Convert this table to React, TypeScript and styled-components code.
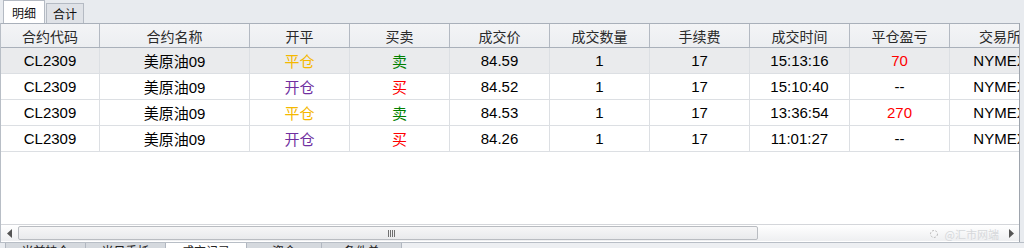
import styled, { createGlobalStyle } from "styled-components";

const GlobalStyle = createGlobalStyle`
  html, body {
    margin: 0;
    padding: 0;
    overflow: hidden;
    background: #e8ebef;
  }
  body {
    font-family: "Liberation Sans", "Noto Sans CJK SC", sans-serif;
  }
`;

const Frame = styled.div`
  width: 1024px;
  height: 248px;
  overflow: hidden;
  display: flex;
  flex-direction: column;
  background: #e8ebef;
`;

const TabStrip = styled.div`
  height: 23px;
  flex-shrink: 0;
  display: flex;
  align-items: flex-end;
  padding-left: 3px;
  gap: 1px;
`;

const Tab = styled.div<{ $active?: boolean }>`
  height: ${(p) => (p.$active ? 23 : 20)}px;
  padding: 0 ${(p) => (p.$active ? 8 : 6)}px;
  box-sizing: border-box;
  display: flex;
  align-items: center;
  font-size: 12px;
  color: #111;
  background: ${(p) => (p.$active ? "#ffffff" : "#dfe2e7")};
  border: 1px solid #b4bac3;
  border-bottom: none;
`;

const Panel = styled.div`
  width: 1020px;
  height: 219px;
  flex-shrink: 0;
  background: #ffffff;
  border-left: 1px solid #b8bec6;
  border-right: 1px solid #9ea4ad;
  box-sizing: border-box;
  display: flex;
  flex-direction: column;
  overflow: hidden;
`;

const Table = styled.div`
  flex: 1;
  overflow: hidden;
`;

const Row = styled.div<{ $head?: boolean; $selected?: boolean }>`
  display: grid;
  grid-template-columns: 99px 150px repeat(7, 100px) 100px;
  height: ${(p) => (p.$head ? 25 : 26)}px;
  box-sizing: border-box;
  border-top: ${(p) => (p.$head ? "1px solid #a9b0ba" : "none")};
  border-bottom: 1px solid ${(p) => (p.$head ? "#a9b0ba" : "#dcdfe3")};
  background: ${(p) =>
    p.$head
      ? "linear-gradient(#f3f4f6, #eceef1)"
      : p.$selected
      ? "#eaebed"
      : "#ffffff"};
  font-size: ${(p) => (p.$head ? 14 : 15)}px;
  color: ${(p) => (p.$head ? "#2a2a2a" : "#000")};
`;

const Cell = styled.div<{ $head?: boolean; $tone?: string }>`
  display: flex;
  align-items: center;
  justify-content: center;
  border-right: 1px solid ${(p) => (p.$head ? "#b3b9c2" : "#dcdfe3")};
  color: ${(p) => p.$tone || "inherit"};
  white-space: nowrap;
  overflow: hidden;
  &:last-child {
    border-right: none;
  }
`;

const ScrollBar = styled.div`
  position: relative;
  height: 16px;
  flex-shrink: 0;
  margin-bottom: 1px;
  display: flex;
  align-items: center;
  border-top: 1px solid #d4d6da;
  background: linear-gradient(#ffffff, #eeeff1);
`;

const Arrow = styled.div`
  width: 17px;
  display: flex;
  justify-content: center;
  svg {
    display: block;
  }
`;

const Thumb = styled.div`
  width: 740px;
  height: 14px;
  box-sizing: border-box;
  border: 1px solid #b9bcc1;
  border-radius: 2px;
  background: linear-gradient(#f6f6f7, #e9eaec);
  display: flex;
  align-items: center;
  justify-content: center;
`;

const Grip = styled.div`
  width: 7px;
  height: 7px;
  margin-left: 6px;
  background: repeating-linear-gradient(90deg, #707070 0 1px, transparent 1px 2px);
`;

const Track = styled.div`
  flex: 1;
`;

const Watermark = styled.div`
  position: absolute;
  right: 20px;
  top: 1px;
  display: flex;
  align-items: center;
  gap: 6px;
  font-size: 11px;
  color: #d6d8db;
  font-family: "Noto Sans CJK SC", sans-serif;
`;

const BottomTabs = styled.div`
  flex: 1;
  min-height: 0;
  display: flex;
  padding-left: 5px;
  border-top: 1px solid #b8bec6;
`;

const BottomTab = styled.div<{ $active?: boolean; $w: number }>`
  width: ${(p) => p.$w}px;
  box-sizing: border-box;
  padding-top: 1px;
  text-align: center;
  font-size: 12px;
  line-height: 16px;
  color: #222;
  background: ${(p) => (p.$active ? "#ffffff" : "#d5d9de")};
  border-left: 1px solid #b1b7c0;
`;

const BottomFill = styled.div`
  flex: 1;
  background: #edeff2;
  border-left: 1px solid #b1b7c0;
`;

const OPEN = "#7030a0";
const CLOSE = "#f5b800";
const BUY = "#ff0000";
const SELL = "#008000";
const PROFIT = "#ff0000";

const headers = ["合约代码", "合约名称", "开平", "买卖", "成交价", "成交数量", "手续费", "成交时间", "平仓盈亏", "交易所"];

const trades = [
  { code: "CL2309", name: "美原油09", oc: "平仓", side: "卖", price: "84.59", qty: 1, fee: 17, time: "15:13:16", pnl: "70" },
  { code: "CL2309", name: "美原油09", oc: "开仓", side: "买", price: "84.52", qty: 1, fee: 17, time: "15:10:40", pnl: "--" },
  { code: "CL2309", name: "美原油09", oc: "平仓", side: "卖", price: "84.53", qty: 1, fee: 17, time: "13:36:54", pnl: "270" },
  { code: "CL2309", name: "美原油09", oc: "开仓", side: "买", price: "84.26", qty: 1, fee: 17, time: "11:01:27", pnl: "--" },
];

const bottomTabs = [
  { label: "当前持仓", w: 80 },
  { label: "当日委托", w: 80 },
  { label: "成交记录", w: 81, active: true },
  { label: "资金", w: 75 },
  { label: "条件单", w: 80 },
];

export default function App() {
  return (
    <>
      <GlobalStyle />
      <Frame>
        <TabStrip>
          <Tab $active>明细</Tab>
          <Tab>合计</Tab>
        </TabStrip>
        <Panel>
          <Table>
            <Row $head>
              {headers.map((h) => (
                <Cell $head key={h}>
                  {h}
                </Cell>
              ))}
            </Row>
            {trades.map((t, i) => (
              <Row key={i} $selected={i === 0}>
                <Cell>{t.code}</Cell>
                <Cell>{t.name}</Cell>
                <Cell $tone={t.oc === "平仓" ? CLOSE : OPEN}>{t.oc}</Cell>
                <Cell $tone={t.side === "买" ? BUY : SELL}>{t.side}</Cell>
                <Cell>{t.price}</Cell>
                <Cell>{t.qty}</Cell>
                <Cell>{t.fee}</Cell>
                <Cell>{t.time}</Cell>
                <Cell $tone={t.pnl === "--" ? undefined : PROFIT}>{t.pnl}</Cell>
                <Cell>NYMEX</Cell>
              </Row>
            ))}
          </Table>
          <ScrollBar>
            <Arrow>
              <svg width="6" height="9" viewBox="0 0 6 9">
                <path d="M5 0 L0 4.5 L5 9 Z" fill="#555" />
              </svg>
            </Arrow>
            <Thumb>
              <Grip />
            </Thumb>
            <Track />
            <Arrow>
              <svg width="6" height="9" viewBox="0 0 6 9">
                <path d="M1 0 L6 4.5 L1 9 Z" fill="#555" />
              </svg>
            </Arrow>
            <Watermark>
              <svg width="10" height="10" viewBox="0 0 10 10">
                <circle cx="5" cy="5" r="3.5" fill="none" stroke="#bbb" strokeWidth="1" strokeDasharray="2 1.5" />
              </svg>
              @汇市网端
            </Watermark>
          </ScrollBar>
        </Panel>
        <BottomTabs>
          {bottomTabs.map((b) => (
            <BottomTab key={b.label} $w={b.w} $active={b.active}>
              {b.label}
            </BottomTab>
          ))}
          <BottomFill />
        </BottomTabs>
      </Frame>
    </>
  );
}
